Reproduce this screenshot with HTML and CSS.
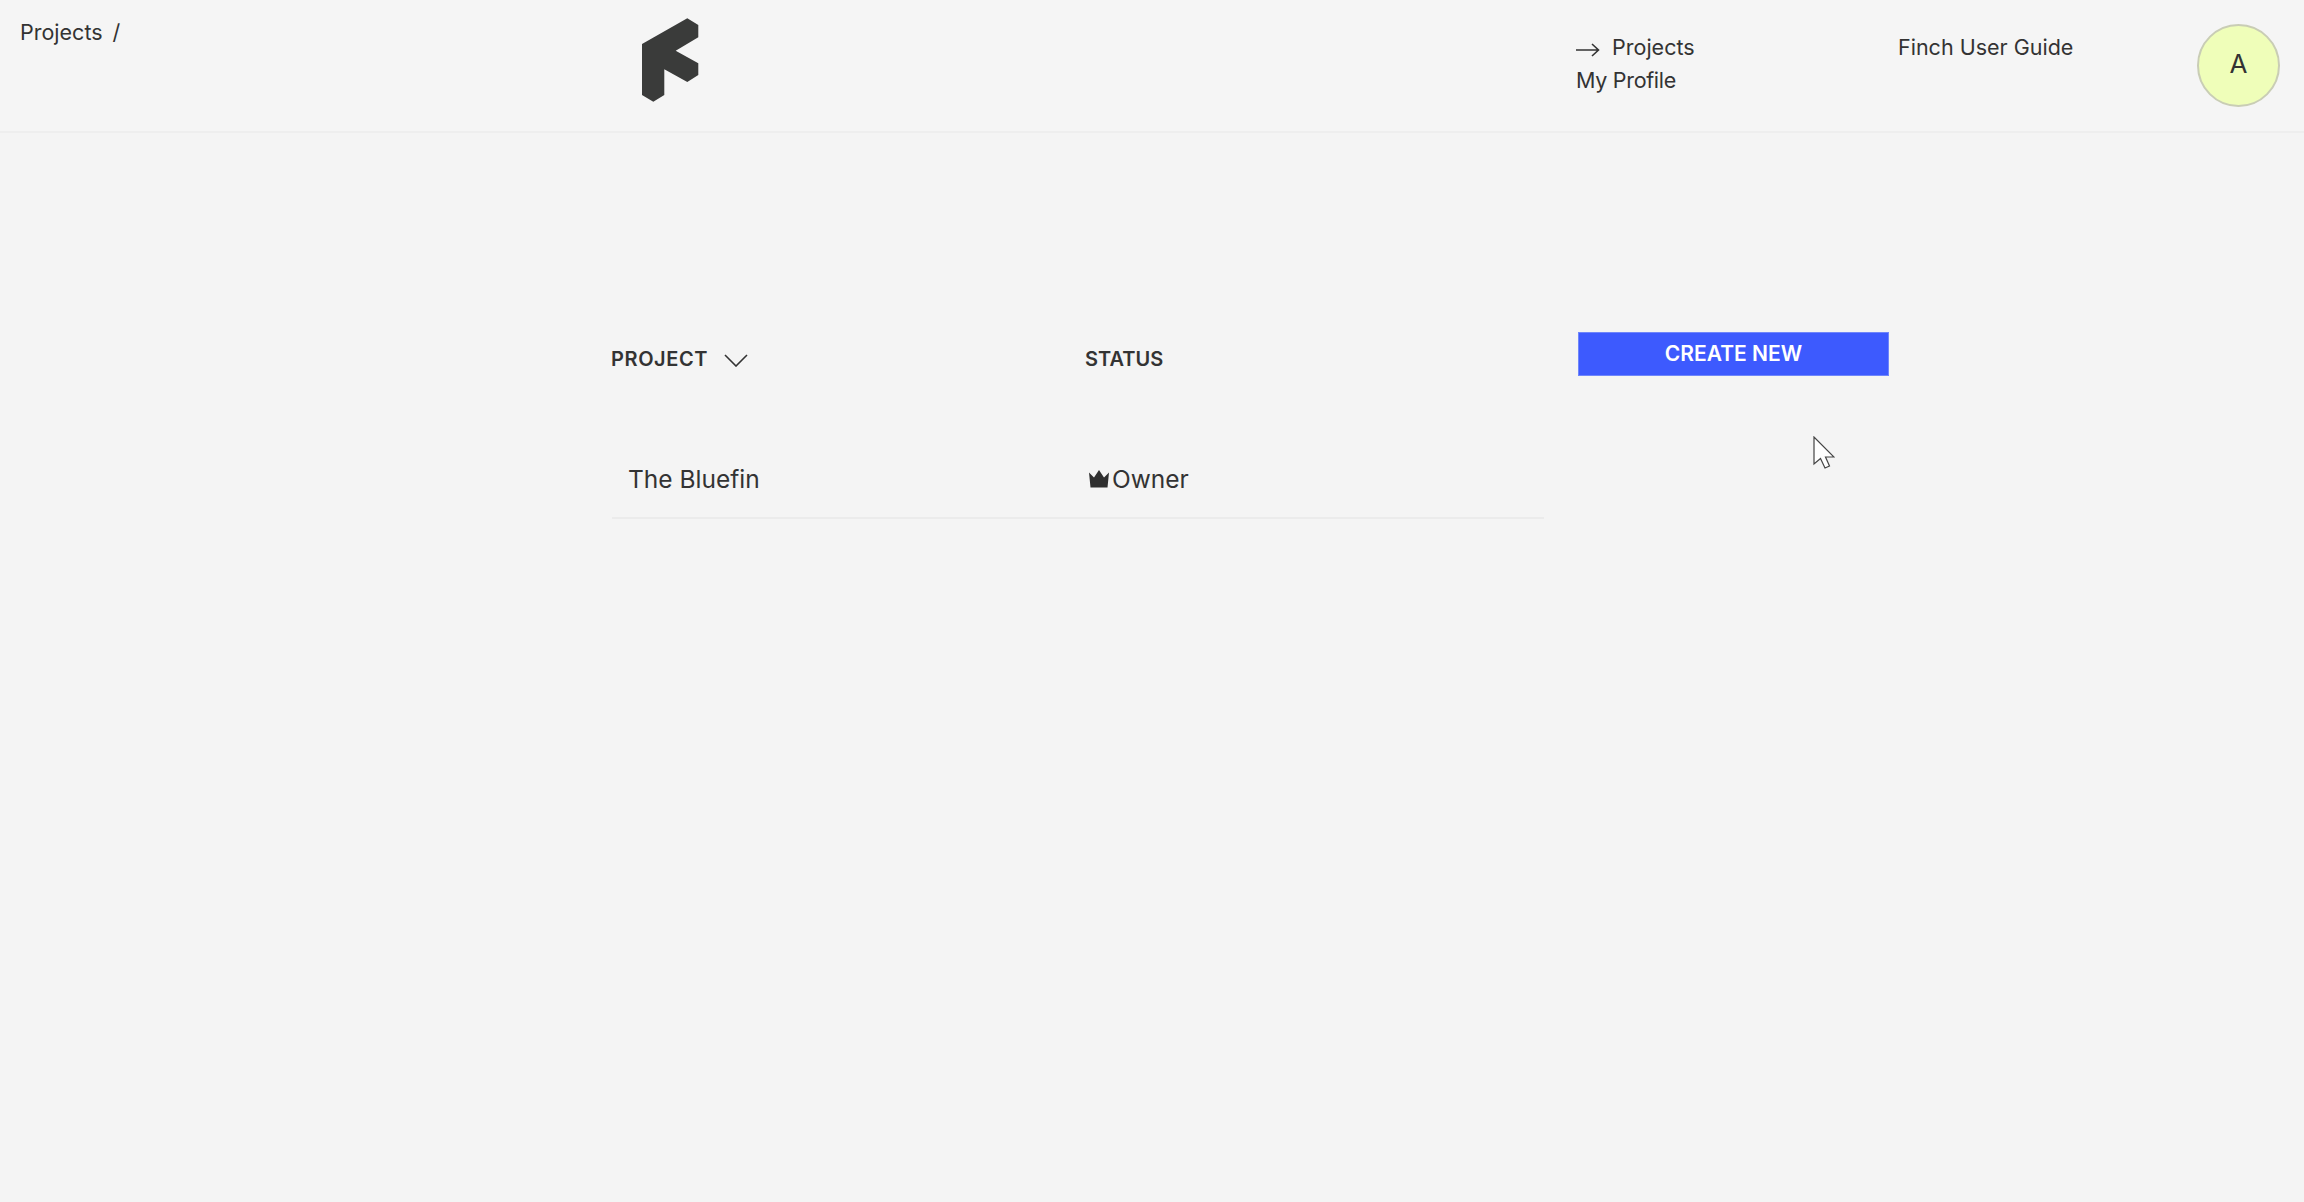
FILE: index.html
```html
<!DOCTYPE html>
<html lang="en">
<head>
  <meta charset="UTF-8" />
  <title>Projects - Finch</title>
  <link rel="stylesheet" href="styles.css">
</head>
<body>

  <header class="topbar">
    <div class="crumbs">Projects /</div>

    <a class="logo" href="#">
      <svg width="58" height="86" viewBox="642 18 58 86">
        <path fill="#3a3b3a" d="M687.3 18.3 698.3 25V37.3L675.7 50.7 698.3 63.3V75L687.3 82 664.3 69.3V95L653.3 101.7 642 95V44Z"/>
      </svg>
    </a>

    <nav class="nav-main">
      <a class="nav-link" href="#">
        <svg class="nav-arrow" width="24" height="14" viewBox="0 0 24 14">
          <path fill="none" stroke="#333" stroke-width="1.6" d="M0 7H22M16 1l6.500 6-6.500 6"/>
        </svg>
        Projects
      </a>
      <a class="nav-link profile-link" href="#">My Profile</a>
    </nav>

    <a class="nav-link guide" href="#">Finch User Guide</a>

    <div class="avatar">A</div>
  </header>

  <main class="content">
    <section class="projects">
      <div class="table-head">
        <div class="head-cell head-project">
          PROJECT
          <svg class="sort-icon" width="24" height="13" viewBox="0 0 24 13">
            <path fill="none" stroke="#333" stroke-width="1.6" d="M1 1l11 11L23 1"/>
          </svg>
        </div>
        <div class="head-cell">STATUS</div>
      </div>

      <div class="table-row">
        <div class="project-name">The Bluefin</div>
        <div class="project-status">
          <svg class="crown" width="20" height="18" viewBox="0 0 20 18">
            <path fill="#2f2f2f" d="M0 2.500 5 7.500 10 0l5 7.500 5-5-1.500 15H1.500Z"/>
          </svg>
          Owner
        </div>
      </div>
    </section>

    <button class="create-btn">CREATE NEW</button>
  </main>

  <svg class="cursor" width="22" height="33" viewBox="0 0 22 33">
    <path fill="#fff" stroke="#444" stroke-width="1.2" d="M1 1V28L7.500 22.500 12 32 16.500 30 12.500 21H21Z"/>
  </svg>

</body>
</html>
```

FILE: styles.css
```css
* {
  box-sizing: border-box;
}

body {
  margin: 0;
  min-height: 100vh;
  font-family: Inter, 'Liberation Sans', sans-serif;
  font-size: 21.5px;
  color: #333;
  background-color: #f4f4f4;
}

a {
  color: inherit;
  text-decoration: none;
}

.topbar {
  display: grid;
  grid-template-columns: 642px 934px 322px 1fr 83px;
  height: 133px;
  padding-right: 24px;
  line-height: 33px;
  background-color: #f5f5f5;
  border-bottom: 2px solid #eeeeee;
}

.crumbs {
  padding: 16px 0 0 20px;
  word-spacing: 4px;
}

.logo {
  padding-top: 18px;
}

.logo svg {
  display: block;
}

.nav-main {
  display: flex;
  flex-direction: column;
  padding-top: 31px;
}

.nav-arrow {
  margin-right: 6px;
  vertical-align: -2px;
}

.profile-link {
  letter-spacing: -0.3px;
}

.guide {
  padding-top: 31px;
}

.avatar {
  display: flex;
  align-items: center;
  justify-content: center;
  width: 83px;
  height: 83px;
  margin-top: 24px;
  padding-bottom: 4px;
  font-size: 26px;
  background-color: #effeb9;
  border: 2px solid #c9cdb5;
  border-radius: 50%;
}

.content {
  display: flex;
  align-items: flex-start;
  gap: 34px;
  padding: 199px 0 0 612px;
}

.projects {
  width: 932px;
}

.table-head {
  display: grid;
  grid-template-columns: 474px 1fr;
  height: 52px;
  margin-left: -1px;
  padding-top: 1px;
  align-items: center;
  font-size: 20px;
  font-weight: 600;
}

.head-project {
  letter-spacing: 0.6px;
}

.sort-icon {
  margin-left: 10px;
  vertical-align: -1px;
}

.table-row {
  display: grid;
  grid-template-columns: 474px 1fr;
  align-items: center;
  height: 135px;
  padding-top: 56px;
  font-size: 24.5px;
  border-bottom: 2px solid #ebebeb;
}

.project-name {
  padding-left: 16px;
}

.project-status {
  display: flex;
  align-items: center;
  gap: 3px;
  padding-left: 3px;
}

.create-btn {
  width: 311px;
  height: 44px;
  padding: 0 0 2px;
  font-family: inherit;
  font-size: 21px;
  font-weight: 600;
  color: #fff;
  background-color: #3d5afe;
  border: 1px solid #6f86fb;
}

.cursor {
  position: absolute;
  left: 1813px;
  top: 436px;
}
```
